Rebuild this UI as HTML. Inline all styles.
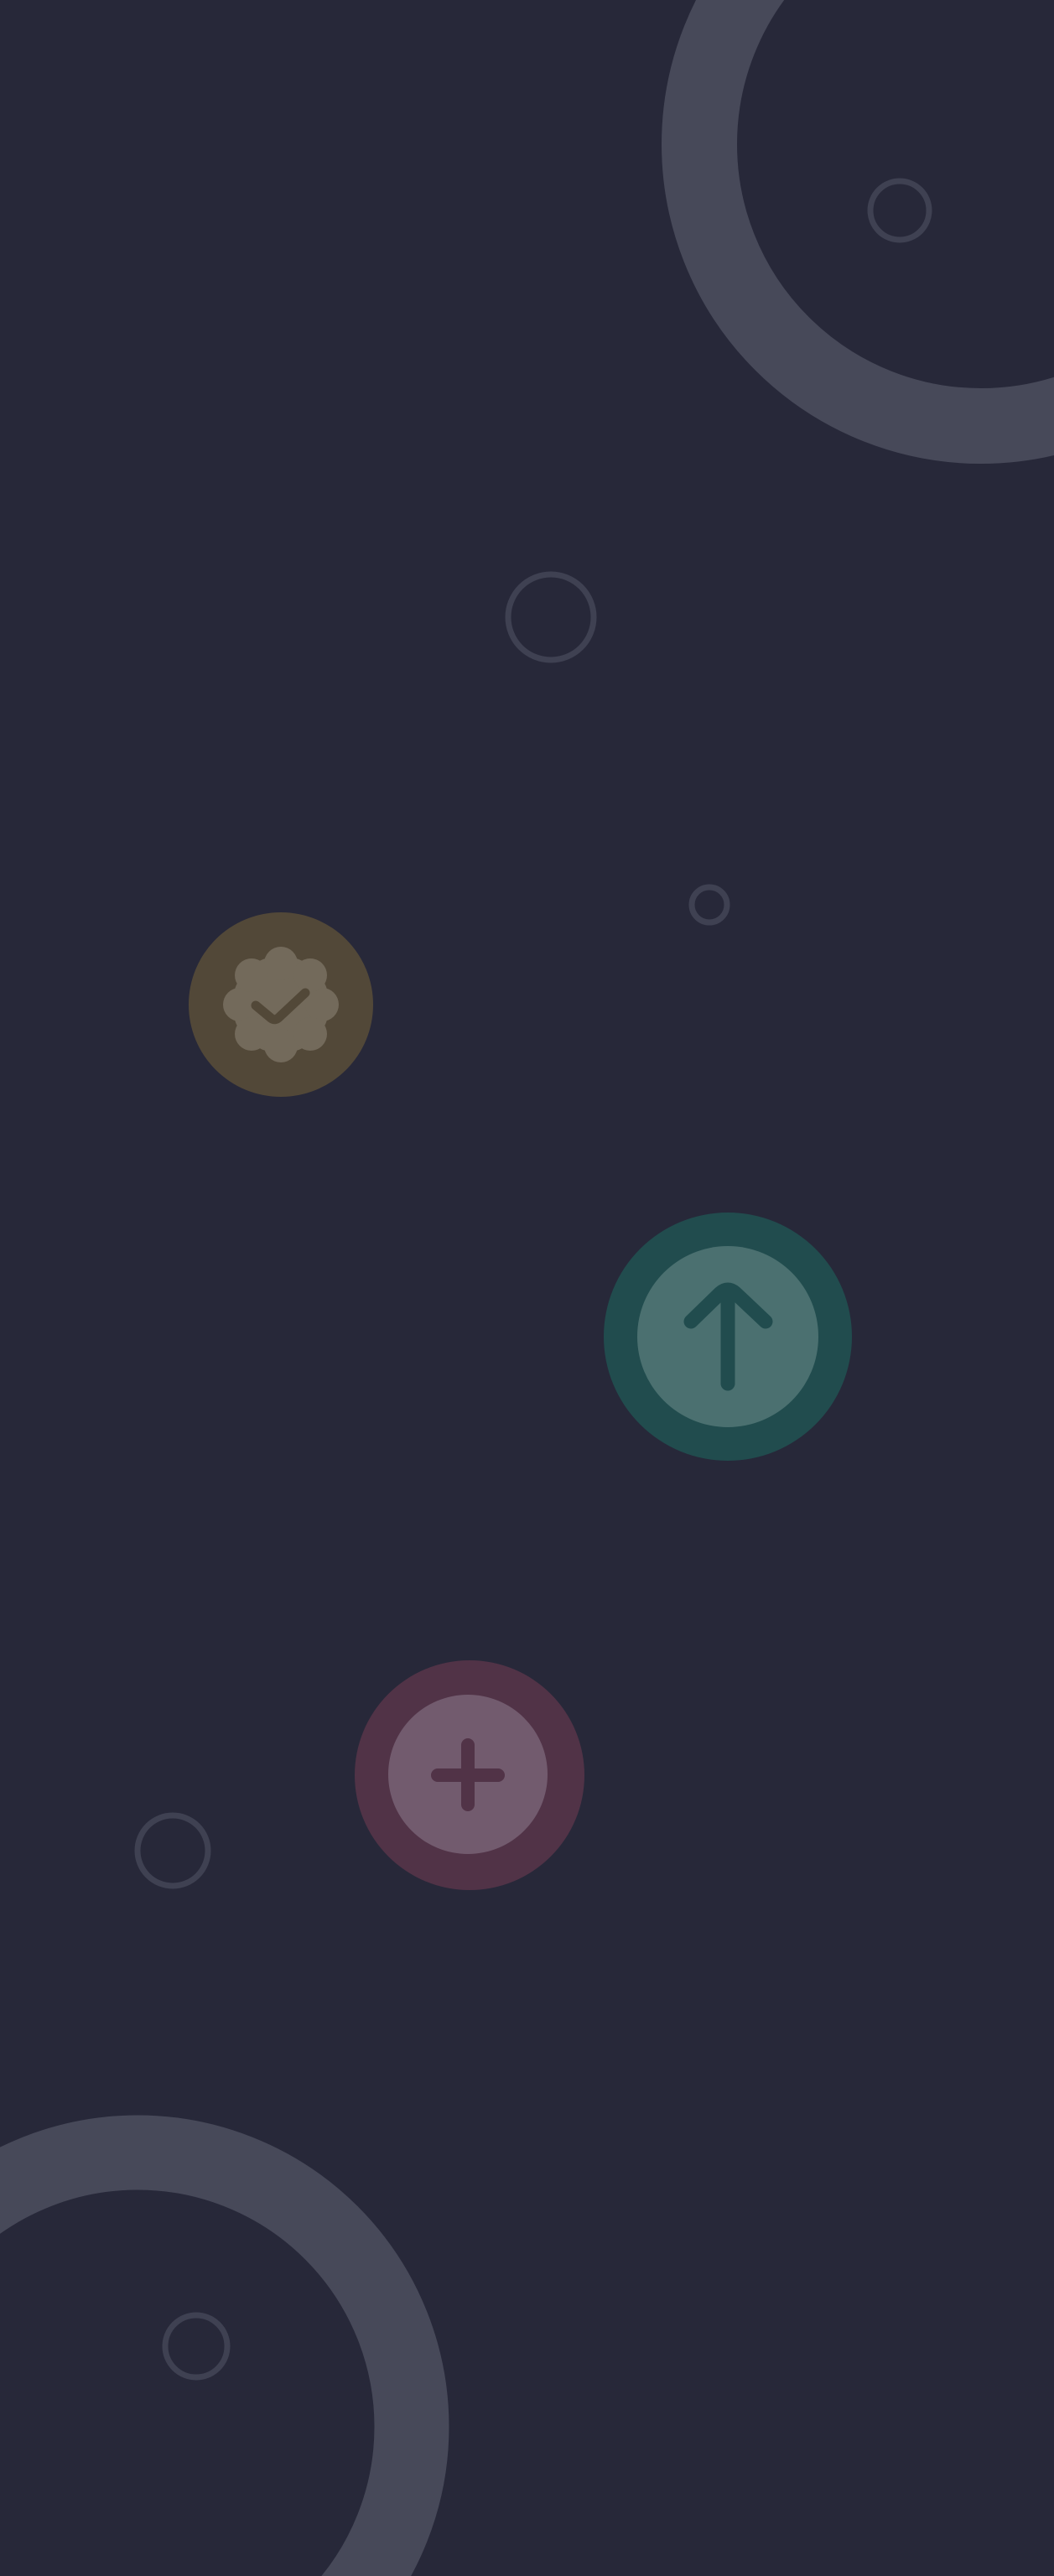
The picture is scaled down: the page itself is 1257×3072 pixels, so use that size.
<!DOCTYPE html>
<html><head><meta charset="utf-8"><style>
html,body{margin:0;padding:0;background:#272839;}
svg{display:block}
</style></head><body>
<svg width="1257" height="3072" viewBox="0 0 1257 3072" xmlns="http://www.w3.org/2000/svg">
<rect width="1257" height="3072" fill="#272839"/>
<g fill="none" stroke="#474959">
<circle cx="1170" cy="172" r="336" stroke-width="90"/>
<circle cx="164" cy="2894" r="327" stroke-width="89"/>
</g>
<g fill="none" stroke="#3f4152" stroke-width="7">
<circle cx="1073" cy="251" r="35"/>
<circle cx="657" cy="736" r="51"/>
<circle cx="846" cy="1079" r="21"/>
<circle cx="206" cy="2207" r="42"/>
<circle cx="234" cy="2798" r="37"/>
</g>
<!-- gold badge -->
<circle cx="335" cy="1198" r="110" fill="#524838"/>
<g fill="#736a5b">
<circle cx="335" cy="1198" r="58"/>
<circle cx="335" cy="1149" r="20"/>
<circle cx="335" cy="1247" r="20"/>
<circle cx="286" cy="1198" r="20"/>
<circle cx="384" cy="1198" r="20"/>
<circle cx="300" cy="1163" r="20"/>
<circle cx="370" cy="1163" r="20"/>
<circle cx="300" cy="1233" r="20"/>
<circle cx="370" cy="1233" r="20"/>
</g>
<path d="M305 1199 L323 1214 Q328 1218 333 1213 L364 1184" fill="none" stroke="#524838" stroke-width="11" stroke-linecap="round" stroke-linejoin="round"/>
<!-- teal -->
<circle cx="868" cy="1594" r="148" fill="#214c4e"/>
<circle cx="868" cy="1594" r="108" fill="#4b7070"/>
<path d="M868 1650 V1542 M824 1576 L859 1542 Q868 1534 877 1542 L913 1576" fill="none" stroke="#214c4e" stroke-width="17" stroke-linecap="round" stroke-linejoin="round"/>
<!-- pink -->
<circle cx="560" cy="2117" r="137" fill="#513347"/>
<circle cx="558" cy="2116" r="95" fill="#725b6e"/>
<path d="M558 2081 V2152 M522 2117 H594" fill="none" stroke="#513347" stroke-width="16" stroke-linecap="round"/>
</svg>
</body></html>
